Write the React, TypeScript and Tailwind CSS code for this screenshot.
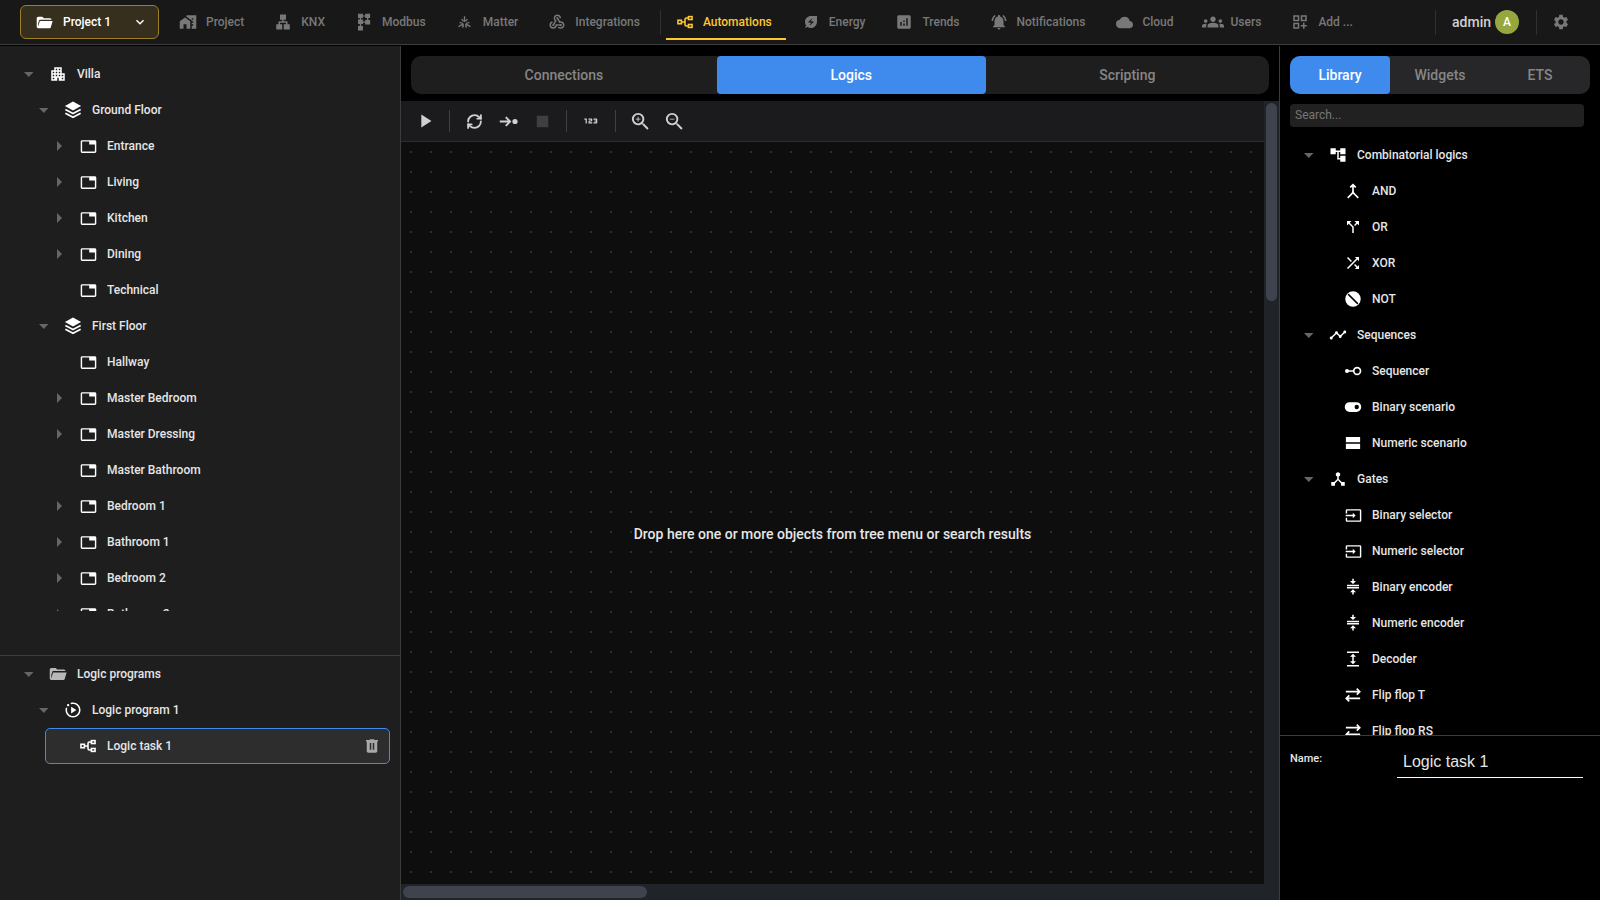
import { useState } from "react";
import type { ComponentType, ReactNode } from "react";
import clsx from "clsx";
import { RefreshCw } from "lucide-react";
import {
    Md123, MdAccountTree, MdAnalytics, MdApartment, MdCallSplit, MdCloud, MdCompress, MdDeviceHub,
    MdEnergySavingsLeaf, MdExpand, MdGroups, MdInput, MdKeyboardArrowDown, MdLan, MdMapsHomeWork, MdMerge,
    MdNotificationsActive, MdOutlineDashboardCustomize, MdPlayArrow, MdSettings, MdShuffle, MdStop, MdTab,
    MdTimeline, MdWebhook, MdZoomIn, MdZoomOut,
} from "react-icons/md";

type IconProps = { size?: number; className?: string };
type IconType = ComponentType<IconProps>;

function Svg({ size = 18, className, children }: IconProps & { children: ReactNode }) {
    return (
        <svg width={size} height={size} viewBox="0 0 24 24" fill="currentColor" className={className} aria-hidden="true">
            {children}
        </svg>
    );
}

const FolderIcon = (p: IconProps) => (
    <Svg {...p}>
        <path d="M3 20q-.825 0-1.4125-.5875T1 18V6q0-.825.5875-1.4125T3 4h6l2 2h9q.825 0 1.4125.5875T22 8H5.5q-.8 0-1.1.9L3 13.5V18l2.4-8h18.1l-2.575 8.575q-.2.65-.7375 1.0375T19 20H3Z" />
    </Svg>
);

const ModbusIcon = (p: IconProps) => (
    <Svg {...p}>
        <path d="M4 1h6.600v5.800H8.200v2h2.400v6H8.200v2.600h2.400v6H4v-6h2.400v-2.600H4v-6h2.400v-2H4zM13.600 1h6.600v5.800h-2.400v2.600h2.400v6h-6.600v-6h2.400V6.800h-2.400zM10.600 3.300h3v1.500h-3zM10.600 11.400h3v1.500h-3z" />
    </Svg>
);

const MatterIcon = (p: IconProps) => (
    <Svg {...p}>
        <g fill="none" stroke="currentColor" strokeWidth="2.200">
            <path d="M12 2v8M7.500 6.500c1 2.500 2.500 3.700 4.500 3.700s3.500-1.200 4.500-3.700" />
            <path d="M12 2v8M7.500 6.500c1 2.500 2.500 3.700 4.500 3.700s3.500-1.200 4.500-3.700" transform="rotate(120 12 13)" />
            <path d="M12 2v8M7.500 6.500c1 2.500 2.500 3.700 4.500 3.700s3.500-1.200 4.500-3.700" transform="rotate(240 12 13)" />
        </g>
    </Svg>
);

const FlowIcon = (p: IconProps) => (
    <Svg {...p}>
        <g fill="none" stroke="currentColor" strokeWidth="2.100">
            <rect x="2.600" y="9.700" width="4.600" height="4.600" />
            <rect x="16.600" y="4.800" width="4.800" height="3.900" />
            <rect x="16.600" y="15.300" width="4.800" height="3.900" />
            <path d="M7 12h5M16.500 6.700H14q-2 0-2 2v6.600q0 2 2 2h2.500" />
        </g>
    </Svg>
);

const LayersIcon = (p: IconProps) => (
    <Svg {...p}>
        <path d="M12 .5 22.800 6.500 12 12.500 1.200 6.500z" />
        <path d="m1.800 11.300 10.200 5.300 10.200-5.300M1.800 16.300 12 21.600l10.200-5.300" fill="none" stroke="currentColor" strokeWidth="2.200" />
    </Svg>
);

const ProgramIcon = (p: IconProps) => (
    <Svg {...p}>
        <path d="M9.500 16.500 16.500 12l-7-4.500v9zM22 12c0 5.540-4.460 10-10 10S2 17.540 2 12c0-1.190.22-2.320.6-3.380l1.880.68C4.170 10.140 4 11.050 4 12c0 4.410 3.590 8 8 8s8-3.590 8-8-3.590-8-8-8c-.95 0-1.850.17-2.690.48l-.68-1.890C9.690 2.220 10.820 2 12 2c5.520 0 10 4.480 10 10zM5.500 4C4.670 4 4 4.670 4 5.500S4.670 7 5.500 7 7 6.330 7 5.500 6.330 4 5.500 4z" />
    </Svg>
);

const TrashIcon = (p: IconProps) => (
    <Svg {...p}>
        <path fillRule="evenodd" d="M7 21q-.825 0-1.4125-.5875T5 19V6H4V4h5V3h6v1h5v2h-1v13q0 .825-.5875 1.4125T17 21H7Zm2-4h2V8H9v9Zm4 0h2V8h-2v9Z" />
    </Svg>
);

const StepIcon = (p: IconProps) => (
    <Svg {...p}>
        <path d="M1 12h12M8.500 6.500 14 12l-5.500 5.500" fill="none" stroke="currentColor" strokeWidth="2.400" />
        <circle cx="20.200" cy="12" r="3.300" />
    </Svg>
);

const NotIcon = (p: IconProps) => (
    <Svg {...p}>
        <circle cx="12" cy="12" r="10.300" />
        <path d="m5.500 5.500 13 13" stroke="#000" strokeWidth="2" />
    </Svg>
);

const SequencerIcon = (p: IconProps) => (
    <Svg {...p}>
        <circle cx="4" cy="12" r="2.700" />
        <path d="M5 12h8" stroke="currentColor" strokeWidth="2" />
        <circle cx="17.500" cy="12" r="4.500" fill="none" stroke="currentColor" strokeWidth="2.200" />
    </Svg>
);

const SwitchIcon = (p: IconProps) => (
    <Svg {...p}>
        <path fillRule="evenodd" d="M7.500 5.500h9a6.500 6.500 0 0 1 0 13h-9a6.500 6.500 0 0 1 0-13zm9.500 3.600a2.900 2.900 0 1 0 0 5.800 2.900 2.900 0 0 0 0-5.800z" />
    </Svg>
);

const RowsIcon = (p: IconProps) => (
    <Svg {...p}>
        <path d="M2.500 4h19v7h-19zM2.500 13h19v7h-19z" />
    </Svg>
);

const FlipFlopIcon = (p: IconProps) => (
    <Svg {...p}>
        <path d="M2.500 7.500h18M17 3.500l4 4-4 4M21.500 16.500h-18M7 12.500l-4 4 4 4" fill="none" stroke="currentColor" strokeWidth="2.200" />
    </Svg>
);

type TreeItem = { label: string; level: number; icon: IconType; size?: number; caret?: "open" | "closed"; gray?: boolean };

const room = (label: string, caret = true): TreeItem => ({
    label,
    level: 2,
    icon: MdTab,
    size: 17,
    caret: caret ? "closed" : undefined,
});

const rooms: TreeItem[] = [
    { label: "Villa", level: 0, icon: MdApartment, caret: "open" },
    { label: "Ground Floor", level: 1, icon: LayersIcon, caret: "open" },
    room("Entrance"),
    room("Living"),
    room("Kitchen"),
    room("Dining"),
    room("Technical", false),
    { label: "First Floor", level: 1, icon: LayersIcon, caret: "open" },
    room("Hallway", false),
    room("Master Bedroom"),
    room("Master Dressing"),
    room("Master Bathroom", false),
    room("Bedroom 1"),
    room("Bathroom 1"),
    room("Bedroom 2"),
    room("Bathroom 2"),
];

const programs: TreeItem[] = [
    { label: "Logic programs", level: 0, icon: FolderIcon, caret: "open", gray: true },
    { label: "Logic program 1", level: 1, icon: ProgramIcon, caret: "open" },
    { label: "Logic task 1", level: 2, icon: FlowIcon },
];

const library: TreeItem[] = [
    { label: "Combinatorial logics", level: 0, icon: MdAccountTree, caret: "open" },
    { label: "AND", level: 1, icon: MdMerge, size: 20 },
    { label: "OR", level: 1, icon: MdCallSplit },
    { label: "XOR", level: 1, icon: MdShuffle },
    { label: "NOT", level: 1, icon: NotIcon },
    { label: "Sequences", level: 0, icon: MdTimeline, caret: "open" },
    { label: "Sequencer", level: 1, icon: SequencerIcon },
    { label: "Binary scenario", level: 1, icon: SwitchIcon },
    { label: "Numeric scenario", level: 1, icon: RowsIcon },
    { label: "Gates", level: 0, icon: MdDeviceHub, caret: "open" },
    { label: "Binary selector", level: 1, icon: MdInput, size: 17 },
    { label: "Numeric selector", level: 1, icon: MdInput, size: 17 },
    { label: "Binary encoder", level: 1, icon: MdCompress },
    { label: "Numeric encoder", level: 1, icon: MdCompress },
    { label: "Decoder", level: 1, icon: MdExpand },
    { label: "Flip flop T", level: 1, icon: FlipFlopIcon },
    { label: "Flip flop RS", level: 1, icon: FlipFlopIcon },
];

const menu: { label: string; icon: IconType; size?: number }[] = [
    { label: "Project", icon: MdMapsHomeWork },
    { label: "KNX", icon: MdLan },
    { label: "Modbus", icon: ModbusIcon },
    { label: "Matter", icon: MatterIcon, size: 15 },
    { label: "Integrations", icon: MdWebhook },
    { label: "Automations", icon: FlowIcon },
    { label: "Energy", icon: MdEnergySavingsLeaf, size: 16 },
    { label: "Trends", icon: MdAnalytics },
    { label: "Notifications", icon: MdNotificationsActive },
    { label: "Cloud", icon: MdCloud, size: 17 },
    { label: "Users", icon: MdGroups, size: 22 },
    { label: "Add ...", icon: MdOutlineDashboardCustomize },
];

const indents = ["ml-[15px]", "ml-[30px]", "ml-[45px]"];

function TreeRow({ item, selected, onSelect }: { item: TreeItem; selected?: boolean; onSelect?: () => void }) {
    const Icon = item.icon;

    return (
        <li
            className={clsx(
                "mr-2.5 flex h-9 shrink-0 items-center rounded-[5px] border",
                indents[item.level],
                selected ? "border-[#3e8bed] bg-[#2d2d2d]" : "border-transparent",
            )}
        >
            <span className="flex w-[26px] shrink-0 justify-center">
                {item.caret && (
                    <button type="button" aria-label={`Toggle ${item.label}`} className="text-[#666666]">
                        <svg width="10" height="10" viewBox="0 0 10 10" fill="currentColor">
                            {item.caret === "open" ? <path d="M0 3h9.500L4.750 8z" /> : <path d="M3 0v10l5-5z" />}
                        </svg>
                    </button>
                )}
            </span>
            <button type="button" onClick={onSelect} className="flex h-full flex-1 items-center text-left">
                <span className={clsx("mr-[3px] flex w-8 justify-center", item.gray ? "text-[#b8b8b8]" : "text-white")}>
                    <Icon size={item.size ?? 18} />
                </span>
                <span>{item.label}</span>
            </button>
            {selected && (
                <button type="button" aria-label="Delete" className="mr-2 text-[#a8a8a8]">
                    <TrashIcon />
                </button>
            )}
        </li>
    );
}

function ToolButton({ label, children, disabled }: { label: string; children: ReactNode; disabled?: boolean }) {
    return (
        <button
            type="button"
            aria-label={label}
            disabled={disabled}
            className={clsx("flex h-8 w-[34px] items-center justify-center", disabled ? "text-[#3f3f3f]" : "text-[#d0d0d0]")}
        >
            {children}
        </button>
    );
}

const ToolDivider = () => <span className="mx-[7px] h-[22px] w-px bg-[#404042]" />;
const HeaderDivider = () => <span className="h-[25px] w-px bg-[#303030]" />;

export default function App() {
    const [section, setSection] = useState("Automations");
    const [view, setView] = useState("Logics");
    const [panel, setPanel] = useState("Library");
    const [task, setTask] = useState("Logic task 1");
    const [name, setName] = useState("Logic task 1");

    return (
        <div className="flex h-screen flex-col overflow-hidden bg-black font-[Roboto,sans-serif] text-xs font-medium text-[#e6e6e6]">
            <header className="flex h-[45px] shrink-0 items-center border-b border-[#3c3c3c] bg-[#181818] pl-5">
                <button
                    type="button"
                    className="mr-2.5 flex h-[34px] w-[139px] items-center rounded-md border border-[#9c7f28] bg-[#362f1e] pr-2.5 pl-[15px] text-white"
                >
                    <FolderIcon size={17} />
                    <span className="ml-2.5 flex-1 text-left">Project 1</span>
                    <MdKeyboardArrowDown size={16} />
                </button>
                <nav className="flex h-full items-center gap-1.5">
                    {menu.map(({ label, icon: Icon, size = 18 }) => (
                        <div key={label} className="flex h-full items-center gap-[5px]">
                            {label === "Automations" && <HeaderDivider />}
                            <a
                                href={`#${label.split(" ")[0].toLowerCase()}`}
                                onClick={() => setSection(label)}
                                className={clsx(
                                    "flex h-9 items-center border-b-2 pt-0.5 pr-3.5 pl-2.5 whitespace-nowrap",
                                    section === label ? "border-[#ffc72e] text-[#ffc72e]" : "border-transparent text-[#787878]",
                                )}
                            >
                                <span className="mr-[9px] flex w-[18px] justify-center">
                                    <Icon size={size} className="shrink-0" />
                                </span>
                                {label}
                            </a>
                        </div>
                    ))}
                </nav>
                <div className="ml-auto flex items-center pr-[30px]">
                    <HeaderDivider />
                    <span className="ml-4 text-sm text-[#d0d0d0]">admin</span>
                    <span className="mr-[17px] ml-1 flex size-6 items-center justify-center rounded-full bg-[#95a73e] text-white">A</span>
                    <HeaderDivider />
                    <button type="button" aria-label="Settings" className="ml-[15px] text-[#787878]">
                        <MdSettings size={18} />
                    </button>
                </div>
            </header>

            <div className="mt-px flex min-h-0 flex-1">
                <aside className="flex w-[401px] shrink-0 flex-col border-r border-[#3c3c3c] bg-[#1e1e1e]">
                    <div className="h-[610px] border-b border-[#3c3c3c] pt-2.5 pb-11">
                        <ul className="flex h-full flex-col overflow-hidden">
                            {rooms.map((item) => (
                                <TreeRow key={item.label} item={item} />
                            ))}
                        </ul>
                    </div>
                    <ul className="flex flex-col">
                        {programs.map((item) => (
                            <TreeRow key={item.label} item={item} selected={task === item.label} onSelect={() => setTask(item.label)} />
                        ))}
                    </ul>
                </aside>

                <main className="flex min-w-0 flex-1 flex-col">
                    <div className="mx-2.5 mt-2.5 mb-[7px] flex h-[38px] shrink-0 overflow-hidden rounded-[10px] bg-[#1e1e1e] text-sm">
                        {["Connections", "Logics", "Scripting"].map((label) => (
                            <button
                                key={label}
                                type="button"
                                onClick={() => setView(label)}
                                className={clsx("flex-auto rounded", view === label ? "bg-[#3e8bed] text-white" : "text-[#868686]")}
                            >
                                {label}
                            </button>
                        ))}
                    </div>
                    <div className="flex min-h-0 flex-1">
                        <div className="flex min-w-0 flex-1 flex-col">
                            <div className="flex h-[41px] shrink-0 items-center border-b border-[#2d2d2f] bg-[#1b1b1d] pl-[7px]">
                                <ToolButton label="Run"><MdPlayArrow size={22} /></ToolButton>
                                <ToolDivider />
                                <ToolButton label="Refresh"><RefreshCw size={17} strokeWidth={2.6} /></ToolButton>
                                <ToolButton label="Step"><StepIcon size={19} /></ToolButton>
                                <ToolButton label="Stop" disabled><MdStop size={23} /></ToolButton>
                                <ToolDivider />
                                <ToolButton label="Show values"><Md123 size={20} /></ToolButton>
                                <ToolDivider />
                                <ToolButton label="Zoom in"><MdZoomIn size={23} /></ToolButton>
                                <ToolButton label="Zoom out"><MdZoomOut size={23} /></ToolButton>
                            </div>
                            <div className="flex flex-1 items-center justify-center bg-[#0e0e0e] bg-[radial-gradient(circle,#2e2e2e_1px,transparent_1.5px)] bg-[size:20px_20px] pt-[42px] text-sm">
                                Drop here one or more objects from tree menu or search results
                            </div>
                        </div>
                        <div className="w-[15px] shrink-0 bg-[#202428] px-0.5 pt-0.5">
                            <div className="h-[198px] rounded-full bg-[#3f434d]" />
                        </div>
                    </div>
                    <div className="h-4 shrink-0 bg-[#202428] px-0.5 py-0.5">
                        <div className="h-3 w-[244px] rounded-full bg-[#3f434d]" />
                    </div>
                </main>

                <aside className="flex w-[321px] shrink-0 flex-col border-l border-[#3c3c3c]">
                    <div className="mx-2.5 mt-2.5 flex h-[38px] shrink-0 overflow-hidden rounded-[10px] bg-[#272729] text-sm">
                        {["Library", "Widgets", "ETS"].map((label) => (
                            <button
                                key={label}
                                type="button"
                                onClick={() => setPanel(label)}
                                className={clsx("flex-1 rounded", panel === label ? "bg-[#3e8bed] text-white" : "text-[#868686]")}
                            >
                                {label}
                            </button>
                        ))}
                    </div>
                    <input
                        type="search"
                        aria-label="Search"
                        placeholder="Search..."
                        className="mt-2.5 mr-4 ml-2.5 h-[23px] shrink-0 rounded-sm bg-[#212121] px-[5px] pb-0.5 font-normal text-[#e6e6e6] outline-none placeholder:text-[#777777]"
                    />
                    <ul className="mt-2.5 flex min-h-0 flex-1 flex-col overflow-hidden">
                        {library.map((item) => (
                            <TreeRow key={item.label} item={item} />
                        ))}
                    </ul>
                    <div className="flex h-[165px] shrink-0 items-start border-t border-[#3c3c3c] pt-2.5 pr-[17px] pl-2.5">
                        <label htmlFor="task-name" className="w-[107px] shrink-0 pt-1.5 text-[11px]">Name:</label>
                        <input
                            id="task-name"
                            value={name}
                            onChange={(e) => setName(e.target.value)}
                            className="h-8 min-w-0 flex-1 border-b border-white px-1.5 font-['Liberation_Sans',Arial,sans-serif] text-base font-normal outline-none"
                        />
                    </div>
                </aside>
            </div>
        </div>
    );
}
